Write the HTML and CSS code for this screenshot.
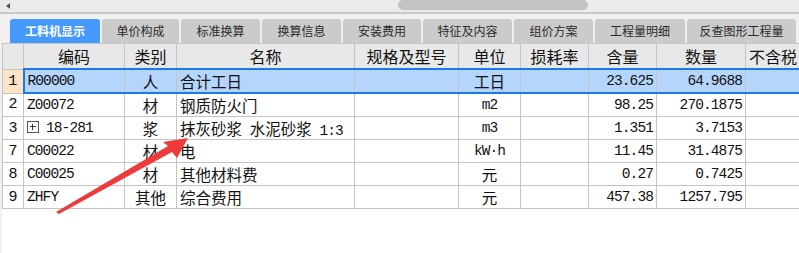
FILE: index.html
```html
<!DOCTYPE html>
<html lang="zh-CN">
<head>
    <meta charset="UTF-8">
    <meta name="viewport" content="width=device-width, initial-scale=1.0">
    <title>工料机显示</title>
    <link rel="stylesheet" href="styles.css">
</head>
<body>

<div class="window">
    <div class="scrollbar">
        <span class="scroll-left"></span>
        <span class="scroll-thumb"></span>
    </div>

    <div class="tabs">
        <div class="tab active w90">工料机显示</div>
        <div class="tab w77">单价构成</div>
        <div class="tab w79">标准换算</div>
        <div class="tab w79">换算信息</div>
        <div class="tab w78">安装费用</div>
        <div class="tab w89">特征及内容</div>
        <div class="tab w79">组价方案</div>
        <div class="tab w90">工程量明细</div>
        <div class="tab w109">反查图形工程量</div>
    </div>

    <div class="grid">
        <table>
            <colgroup>
                <col style="width:21px">
                <col style="width:101px">
                <col style="width:52px">
                <col style="width:178px">
                <col style="width:104px">
                <col style="width:62px">
                <col style="width:68px">
                <col style="width:68px">
                <col style="width:89px">
                <col style="width:95px">
            </colgroup>
            <thead>
                <tr>
                    <th></th>
                    <th>编码</th>
                    <th>类别</th>
                    <th>名称</th>
                    <th>规格及型号</th>
                    <th>单位</th>
                    <th>损耗率</th>
                    <th>含量</th>
                    <th>数量</th>
                    <th class="clipped">不含税</th>
                </tr>
            </thead>
            <tbody>
                <tr class="selected">
                    <td class="row-no current">1</td>
                    <td class="code first">R00000</td>
                    <td class="center">人</td>
                    <td>合计工日</td>
                    <td></td>
                    <td class="center">工日</td>
                    <td></td>
                    <td class="num">23.625</td>
                    <td class="num">64.9688</td>
                    <td></td>
                </tr>
                <tr>
                    <td class="row-no">2</td>
                    <td class="code">Z00072</td>
                    <td class="center">材</td>
                    <td>钢质防火门</td>
                    <td></td>
                    <td class="center latin">m2</td>
                    <td></td>
                    <td class="num">98.25</td>
                    <td class="num">270.1875</td>
                    <td></td>
                </tr>
                <tr>
                    <td class="row-no">3</td>
                    <td class="code"><span class="expand"></span>18-281</td>
                    <td class="center">浆</td>
                    <td>抹灰砂浆&ensp;水泥砂浆&ensp;<span class="latin">1:3</span></td>
                    <td></td>
                    <td class="center latin">m3</td>
                    <td></td>
                    <td class="num">1.351</td>
                    <td class="num">3.7153</td>
                    <td></td>
                </tr>
                <tr>
                    <td class="row-no">7</td>
                    <td class="code">C00022</td>
                    <td class="center">材</td>
                    <td>电</td>
                    <td></td>
                    <td class="center latin">kW·h</td>
                    <td></td>
                    <td class="num">11.45</td>
                    <td class="num">31.4875</td>
                    <td></td>
                </tr>
                <tr>
                    <td class="row-no">8</td>
                    <td class="code">C00025</td>
                    <td class="center">材</td>
                    <td>其他材料费</td>
                    <td></td>
                    <td class="center">元</td>
                    <td></td>
                    <td class="num">0.27</td>
                    <td class="num">0.7425</td>
                    <td></td>
                </tr>
                <tr>
                    <td class="row-no">9</td>
                    <td class="code">ZHFY</td>
                    <td class="center">其他</td>
                    <td>综合费用</td>
                    <td></td>
                    <td class="center">元</td>
                    <td></td>
                    <td class="num">457.38</td>
                    <td class="num">1257.795</td>
                    <td></td>
                </tr>
            </tbody>
        </table>
    </div>

    <!-- red pointer drawn over the grid -->
    <svg class="annotation" width="799" height="253" viewBox="0 0 799 253">
        <polygon points="56,212 59,214 172,152 177,158 188,138 163,142 168,146" fill="#ef3a3b"/>
    </svg>
</div>

</body>
</html>
```

FILE: styles.css
```css
body {
    margin: 0;
    padding: 0;
    background-color: #f0f0f0;
    font-family: "Noto Sans CJK SC", sans-serif;
}
.window {
    position: relative;
    width: 799px;
    height: 253px;
    overflow: hidden;
    background-color: #f0f0f0;
}
.scrollbar {
    display: flex;
    align-items: flex-start;
    height: 12px;
    background-color: #ebebeb;
    border-bottom: 2px solid #c9c9c9;
}
.scroll-left {
    width: 0;
    height: 0;
    margin: 3px 0 0 6px;
    border-top: 3px solid transparent;
    border-bottom: 3px solid transparent;
    border-right: 4px solid #555;
}
.scroll-thumb {
    width: 190px;
    height: 10px;
    margin-left: 388px;
    border-radius: 5px;
    background-color: #c3c3c3;
}
.tabs {
    display: flex;
    gap: 2px;
    padding: 5px 0 0 10px;
    height: 24px;
}
.tab {
    height: 24px;
    line-height: 24px;
    text-align: center;
    font-size: 12px;
    color: #2a2a2a;
    background-color: #cbcbcb;
    border-radius: 3px 3px 0 0;
    white-space: nowrap;
}
.tab.active {
    background-color: #4599ff;
    color: #fff;
    font-weight: bold;
}
.w77 { width: 77px; }
.w78 { width: 78px; }
.w79 { width: 79px; }
.w89 { width: 89px; }
.w90 { width: 90px; }
.w109 { width: 109px; }
.grid {
    margin-left: 2px;
    height: 210px;
    background-color: #fff;
}
table {
    table-layout: fixed;
    width: 838px;
    border-collapse: collapse;
}
th, td {
    border: 1px solid #c4c4c4;
    padding: 0 3px;
    white-space: nowrap;
    overflow: hidden;
    color: #111;
}
th {
    height: 23px;
    background-color: #e8e8e8;
    font-size: 16px;
    font-weight: normal;
    text-align: center;
}
th.clipped {
    text-align: left;
}
td {
    height: 22px;
    font-size: 15.5px;
    text-align: left;
}
.center {
    text-align: center;
}
.row-no {
    padding: 0;
    text-align: center;
    font-family: "Liberation Mono", monospace;
    font-size: 15px;
}
.row-no.current {
    background-color: #fde4c6;
}
.code, .num, .latin {
    font-family: "Liberation Mono", "Noto Sans CJK SC", monospace;
    font-size: 14.5px;
    letter-spacing: -0.9px;
}
.num {
    text-align: right;
}
.selected td {
    background-color: #b5d5fb;
    border-top: 2px solid #1a78f2;
    border-bottom: 2px solid #1a78f2;
}
.selected td.row-no {
    background-color: #fde4c6;
    border-top: 1px solid #c4c4c4;
    border-bottom: 1px solid #c4c4c4;
}
.selected td.first {
    border-left: 2px solid #1a78f2;
}
.expand {
    position: relative;
    display: inline-block;
    width: 10px;
    height: 10px;
    margin-right: 7px;
    border: 1px solid #555;
    vertical-align: -1px;
}
.expand::before,
.expand::after {
    content: "";
    position: absolute;
    background-color: #333;
}
.expand::before {
    left: 2px;
    top: 4px;
    width: 6px;
    height: 1px;
}
.expand::after {
    left: 4px;
    top: 2px;
    width: 1px;
    height: 6px;
}
.annotation {
    position: absolute;
    left: 0;
    top: 0;
    pointer-events: none;
}
```
